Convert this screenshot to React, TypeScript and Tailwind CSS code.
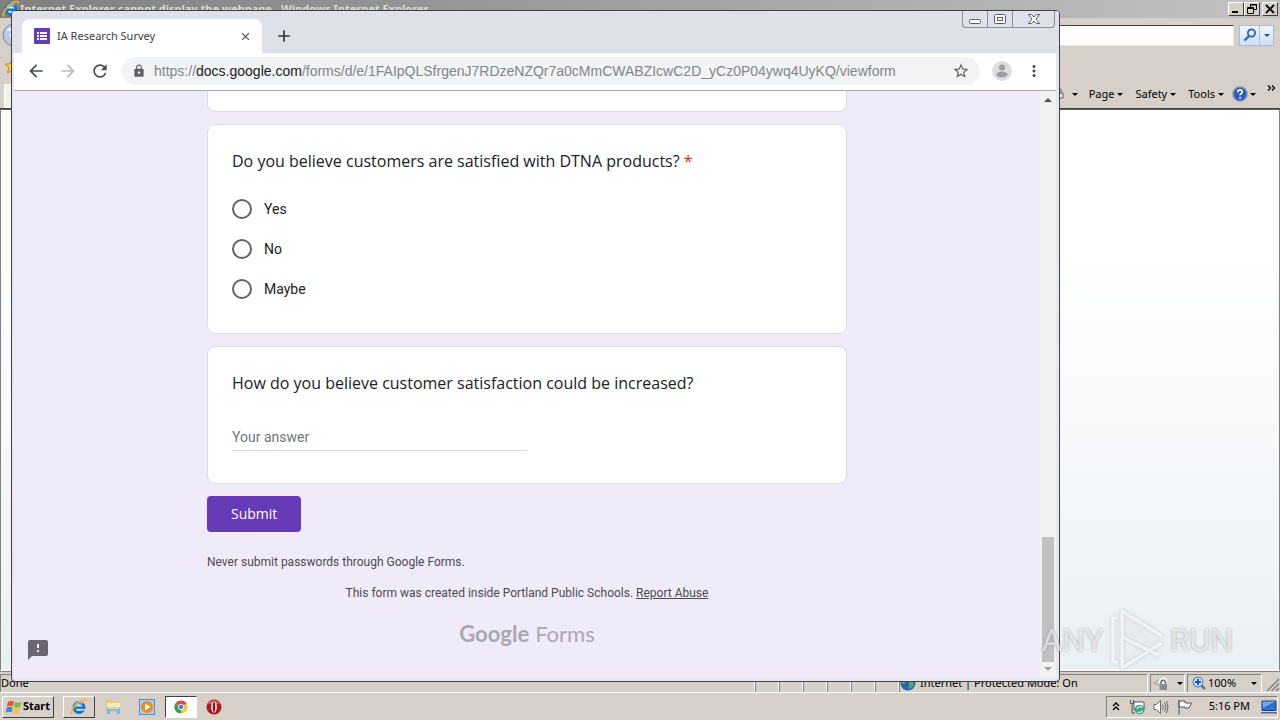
import { useState } from 'react'
import type { ReactNode } from 'react'
import {
  MdAdd, MdArrowBack, MdArrowForward, MdClose, MdFeedback, MdLock, MdMoreVert, MdRefresh, MdStarBorder,
} from 'react-icons/md'

const options = ['Yes', 'No', 'Maybe']
const menus = ['Page', 'Safety', 'Tools']

function Caret({ className = 'w-[6px] h-[3px]' }: { className?: string }) {
  return (
    <svg viewBox="0 0 6 3" className={`shrink-0 ${className}`} fill="currentColor">
      <path d="M0 0h6L3 3z" />
    </svg>
  )
}

function IeLogo() {
  return (
    <svg viewBox="0 0 18 18" className="w-[18px] h-[18px] shrink-0" fill="none">
      <circle cx="9" cy="9.5" r="5" fill="#bfe3fa" stroke="#1b74c9" strokeWidth="3" />
      <path d="M4 9.700h10.500" stroke="#1b74c9" strokeWidth="2.400" />
      <path d="M10.500 12.400h5.500v-1.500h-4.500z" fill="#d6d2ca" />
      <path d="M4.500 7.500a5.500 5.500 0 0 1 8-2" stroke="#7cc6f5" strokeWidth="1.300" />
      <path d="M2 16.500C-.5 14 5 6 11 2.700c3-1.700 5.800-1.700 5.300.8" stroke="#e9b730" strokeWidth="1.700" />
    </svg>
  )
}

function RaisedButton({ label, className = '', children }: { label: string; className?: string; children: ReactNode }) {
  return (
    <button
      type="button"
      aria-label={label}
      className={`flex items-center justify-center bg-[#d6d0c8] border border-t-white border-l-white border-r-[#404040] border-b-[#404040] ${className}`}
    >
      {children}
    </button>
  )
}

function StatusPane({ className = '', children }: { className?: string; children?: ReactNode }) {
  return (
    <div className={`h-[19px] flex items-center border border-t-[#808080] border-l-[#808080] border-r-white border-b-white ${className}`}>
      {children}
    </div>
  )
}

function ExplorerWindow() {
  return (
    <div className="flex-1 min-h-0 flex flex-col bg-[#d6d0c8]">
      {/* Title bar */}
      <div className="h-[18px] flex items-center pl-[2px] pr-[2px] bg-linear-to-r from-[#808080] to-[#c2c2c2]">
        <IeLogo />
        <span className="flex-1 truncate text-[11px] leading-[18px] font-bold text-[#dcd8d0]">
          Internet Explorer cannot display the webpage - Windows Internet Explorer
        </span>
        <RaisedButton label="Minimize" className="w-4 h-[14px]">
          <svg viewBox="0 0 10 10" className="w-[10px] h-[10px]"><path d="M1 7h6v2H1z" /></svg>
        </RaisedButton>
        <RaisedButton label="Restore" className="w-4 h-[14px] mr-[2px]">
          <svg viewBox="0 0 10 10" className="w-[10px] h-[10px]" fill="none" stroke="#000">
            <path d="M3.500 3V.5h6v5H7M3 1h7" /><path d="M.5 3.500h6v6h-6zM0 4.500h7" />
          </svg>
        </RaisedButton>
        <RaisedButton label="Close" className="w-4 h-[14px]">
          <svg viewBox="0 0 10 10" className="w-[10px] h-[10px]" stroke="#000" strokeWidth="1.800"><path d="M1 1l8 8M9 1L1 9" /></svg>
        </RaisedButton>
      </div>

      {/* Address and search */}
      <div className="h-[34px] flex items-center pr-[6px] pl-[2px] gap-[5px]">
        <svg viewBox="0 0 24 24" className="w-6 h-6 shrink-0">
          <circle cx="12" cy="12" r="11" fill="#b9cbe0" stroke="#7486a0" />
          <path d="M4 8a9 7 0 0 1 16 0z" fill="#eef4fb" />
          <path d="M7 12l5-4v8z" fill="#fff" />
        </svg>
        <input
          type="text"
          aria-label="Search"
          className="flex-1 min-w-0 h-[21px] px-1 bg-white text-[11px] outline-none border border-t-[#404040] border-l-[#404040] border-r-[#e8e4dc] border-b-[#e8e4dc]"
        />
        <div className="flex h-[21px] border border-[#a9bdd6] bg-linear-to-b from-[#f1f6fd] to-[#cfdff4]">
          <button type="button" aria-label="Search" className="w-5 flex items-center justify-center border-r border-[#a9bdd6]">
            <svg viewBox="0 0 14 14" className="w-[14px] h-[14px]" fill="#dcebff" stroke="#2a62c4" strokeWidth="1.800">
              <circle cx="8.500" cy="5" r="3.600" /><path d="M6 8l-4.500 4.500" strokeWidth="2.400" />
            </svg>
          </button>
          <button type="button" aria-label="Search options" className="w-[13px] flex items-center justify-center text-[#1d4f9e]">
            <Caret />
          </button>
        </div>
      </div>

      {/* Favorites and command bar */}
      <div className="h-[28px] flex items-center pl-1">
        <svg viewBox="0 0 16 16" className="w-4 h-4"><path d="M8 1l2 5h5l-4 3.500 1.500 5.500L8 12l-4.500 3L5 9.500 1 6h5z" fill="#ffd24a" stroke="#c98a12" /></svg>
      </div>
      <div className="h-[29px] flex items-center justify-end pr-[4px] pl-1 text-[11px] text-black border-b border-[#404040]">
        <div className="mr-auto self-stretch mt-1 w-40 bg-[#f3f1ec] border border-white" />
        <span className="flex items-center gap-2 mr-[11px]">
          <svg viewBox="0 0 12 12" className="w-3 h-3" fill="#e8e8e8" stroke="#666"><path d="M3 1h6v4H3zM1 5h10v5H1z" /></svg>
          <Caret />
        </span>
        <div className="flex gap-3 mr-2">
          {menus.map(item => (
            <button key={item} type="button" className="flex items-center gap-[3px]">
              {item}
              <Caret />
            </button>
          ))}
        </div>
        <button type="button" aria-label="Help" className="flex items-center gap-[2px] mr-[11px]">
          <svg viewBox="0 0 16 16" className="w-4 h-4" fill="none">
            <circle cx="8" cy="8" r="7" fill="#2a5bc0" stroke="#8793a8" strokeWidth="1.500" />
            <path d="M5.700 6.200c0-3.200 4.800-3 4.600-.2-.1 1.500-2.200 1.600-2.200 3.300M8.100 10.700v1.700" stroke="#fff" strokeWidth="1.700" />
          </svg>
          <Caret />
        </button>
        <button type="button" aria-label="More commands" className="mb-3">
          <svg viewBox="0 0 9 6" className="w-[9px] h-[6px]" fill="none" stroke="#000" strokeWidth="1.300">
            <path d="M1 .5L3.500 3 1 5.500M5 .5L7.500 3 5 5.500" />
          </svg>
        </button>
      </div>

      {/* Document */}
      <div className="flex-1 border-x border-x-[#808080] border-t border-t-[#606060] border-b border-b-white bg-linear-to-b from-white from-25% to-[#ebf0f5]" />

      {/* Status bar */}
      <div className="h-[21px] pt-[2px] flex items-center text-[11px] text-black border-t border-[#808080]">
        <StatusPane className="flex-1">Done</StatusPane>
        <StatusPane className="w-6" />
        <StatusPane className="w-6" />
        <StatusPane className="w-6" />
        <StatusPane className="w-6" />
        <StatusPane className="w-6" />
        <StatusPane className="w-6" />
        <StatusPane className="w-[249px] gap-1">
          <svg viewBox="0 0 16 16" className="w-4 h-4">
            <circle cx="8" cy="8" r="7.500" fill="#2b62b8" />
            <path d="M3 3c3-2 5-1 5 1s-3 2-3 4-3 1-4-1zM9 7c3-2 5 0 5 2s-3 5-5 5 1-3 0-4z" fill="#45b25a" />
          </svg>
          <span>Internet | Protected Mode: On</span>
        </StatusPane>
        <StatusPane className="w-[35px] ml-[2px] justify-center gap-2">
          <svg viewBox="0 0 16 16" className="w-4 h-4">
            <path d="M1 8l8-6 3 3-7 5z" fill="#d0d0d0" stroke="#9a9a9a" />
            <circle cx="10" cy="6.500" r="4.500" fill="#f0f0f0" />
            <path d="M8 9V7.500a2 2 0 0 1 4.500 0V9" fill="none" stroke="#707070" strokeWidth="1.500" />
            <path d="M6.500 9h7.500v6H6.500z" fill="#8c8c8c" />
          </svg>
          <Caret />
        </StatusPane>
        <StatusPane className="w-[75px] ml-[2px] pl-1 gap-[2px]">
          <svg viewBox="0 0 14 14" className="w-[14px] h-[14px]" fill="none">
            <path d="M9 9l4 4" stroke="#6b7280" strokeWidth="2.500" />
            <circle cx="6" cy="6" r="4.800" fill="#dbeafe" stroke="#5d8fd6" strokeWidth="1.400" />
            <path d="M6 3v6M3 6h6" stroke="#1558c0" strokeWidth="2" />
          </svg>
          <span className="flex-1">100%</span>
          <span className="mr-1"><Caret /></span>
        </StatusPane>
        <svg viewBox="0 0 14 14" className="w-[14px] h-[14px] ml-1 self-end" stroke="#808080" strokeWidth="1.500">
          <path d="M1 13L13 1M5.500 13L13 5.500M10 13l3-3" />
        </svg>
      </div>
    </div>
  )
}

function WindowButtons() {
  return (
    <div className="flex h-[17px] border border-t-0 border-[#8b8f9a] rounded-b-[4px] text-[#5c5f66]">
      <button type="button" aria-label="Minimize" className="w-[25px] flex items-center justify-center border-r border-[#8b8f9a]">
        <svg viewBox="0 0 12 10" className="w-3 h-[10px]" fill="#fff" stroke="currentColor"><rect x=".5" y="5.500" width="11" height="4" rx="1" /></svg>
      </button>
      <button type="button" aria-label="Maximize" className="w-[25px] flex items-center justify-center border-r border-[#8b8f9a]">
        <svg viewBox="0 0 12 10" className="w-3 h-[10px]" fill="#fff" stroke="currentColor"><rect x=".5" y=".5" width="11" height="9" rx="1" /><rect x="3.500" y="3.500" width="5" height="3" /></svg>
      </button>
      <button type="button" aria-label="Close" className="w-[41px] flex items-center justify-center">
        <svg viewBox="0 0 12 10" className="w-3 h-[10px]" fill="#fff" stroke="currentColor">
          <path d="M.5.5h3L6 3 8.500.5h3L8 5l3.500 4.500h-3L6 7 3.500 9.500h-3L4 5z" />
        </svg>
      </button>
    </div>
  )
}

function SurveyForm() {
  const [choice, setChoice] = useState('')
  const [answer, setAnswer] = useState('')

  return (
    <form onSubmit={e => e.preventDefault()} className="w-full max-w-[640px] mx-auto font-[Roboto,sans-serif] text-[#202124]">
      <div className="h-[21px] bg-white border border-t-0 border-[#dadce0] rounded-b-lg mb-3" />

      <fieldset className="bg-white border border-[#dadce0] rounded-lg px-6 py-6 mb-3">
        <legend className="contents">
          <span className="block mb-4 text-base leading-6 font-['Open_Sans',sans-serif]">
            Do you believe customers are satisfied with DTNA products? <span className="text-[#d93025]">*</span>
          </span>
        </legend>
        {options.map(option => (
          <label key={option} className="flex items-center h-10 gap-3 text-sm">
            <input
              type="radio"
              name="satisfied"
              value={option}
              checked={choice === option}
              onChange={() => setChoice(option)}
              className="appearance-none w-5 h-5 rounded-full border-2 border-[#5f6368] checked:border-[6px] checked:border-[#673ab7]"
            />
            {option}
          </label>
        ))}
      </fieldset>

      <div className="bg-white border border-[#dadce0] rounded-lg px-6 pt-6 pb-8 mb-3">
        <label htmlFor="answer" className="block mb-7 text-base leading-6 font-['Open_Sans',sans-serif]">
          How do you believe customer satisfaction could be increased?
        </label>
        <input
          id="answer"
          type="text"
          placeholder="Your answer"
          value={answer}
          onChange={e => setAnswer(e.target.value)}
          className="block w-1/2 h-7 text-sm border-b border-[#dadce0] outline-none placeholder:text-[#70757a]"
        />
      </div>

      <button type="submit" className="block h-9 px-6 rounded bg-[#673ab7] text-white text-sm font-medium font-['Open_Sans',sans-serif]">
        Submit
      </button>

      <p className="mt-[22px] text-xs leading-4 text-[#4d4a53]">Never submit passwords through Google Forms.</p>
      <p className="mt-[15px] text-xs leading-4 text-center text-[#4d4a53]">
        This form was created inside Portland Public Schools. <a href="#report" className="underline">Report Abuse</a>
      </p>
      <p className="mt-[17px] flex justify-center gap-[6px] text-[22px] leading-8 text-[#aba7b1] font-[Lato,sans-serif]">
        <span className="font-bold">Google</span> <span>Forms</span>
      </p>
    </form>
  )
}

function ChromeWindow() {
  return (
    <div className="absolute left-[11px] top-[10px] right-[220px] bottom-[38px] flex flex-col pl-[2px] pr-[3px] pb-[3px] bg-[#e6e8ee] border border-[#3f4048] rounded-t-[4px] rounded-b-[4px] overflow-hidden">
      {/* Tab strip */}
      <div className="h-[42px] shrink-0 flex items-start -ml-[2px] -mr-[3px] pl-[10px] pr-1 bg-[#dee1e9]">
        <div className="w-60 h-[34px] mt-2 flex items-center pl-3 pr-[10px] bg-white rounded-t-lg">
          <svg viewBox="0 0 16 16" className="w-4 h-4 shrink-0">
            <rect width="16" height="16" rx="1" fill="#673ab7" />
            <path d="M3 4h2v2H3zM6 4h7v2H6zM3 7h2v2H3zM6 7h7v2H6zM3 10h2v2H3zM6 10h7v2H6z" fill="#fff" />
          </svg>
          <span className="flex-1 ml-[7px] text-[11px] text-[#3c4043]">IA Research Survey</span>
          <button type="button" aria-label="Close tab"><MdClose className="w-[13px] h-[13px] text-[#45494d]" /></button>
        </div>
        <button type="button" aria-label="New tab" className="mt-[15px] ml-3"><MdAdd className="w-5 h-5 text-[#303439]" /></button>
        <div className="ml-auto"><WindowButtons /></div>
      </div>

      {/* Toolbar */}
      <div className="h-[38px] shrink-0 flex items-center pl-3 pr-[13px] pb-[2px] bg-white border-b border-[#a9a9b0] text-[#5f6368]">
        <button type="button" aria-label="Back"><MdArrowBack className="w-5 h-5 text-[#4a4d51]" /></button>
        <button type="button" aria-label="Forward" className="ml-3"><MdArrowForward className="w-5 h-5 text-[#babcbe]" /></button>
        <button type="button" aria-label="Reload" className="ml-3"><MdRefresh className="w-5 h-5 text-[#4a4d51]" /></button>
        <div className="flex-1 min-w-0 h-7 mx-3 px-[10px] flex items-center bg-[#f1f3f4] rounded-full">
          <MdLock className="w-[14px] h-[14px] shrink-0" />
          <span className="flex-1 truncate ml-2 text-sm font-['Liberation_Sans',sans-serif] text-[#80868b]">
            https://<span className="text-[#202124]">docs.google.com</span>/forms/d/e/1FAIpQLSfrgenJ7RDzeNZQr7a0cMmCWABZIcwC2D_yCz0P04ywq4UyKQ/viewform
          </span>
          <button type="button" aria-label="Bookmark this page"><MdStarBorder className="w-[18px] h-[18px]" /></button>
        </div>
        <button type="button" aria-label="Profile">
          <svg viewBox="0 0 20 20" className="w-5 h-5">
            <circle cx="10" cy="10" r="10" fill="#dcdddf" />
            <circle cx="10" cy="6.500" r="3" fill="#9a9da1" />
            <ellipse cx="10" cy="13.500" rx="5.500" ry="3" fill="#9a9da1" />
          </svg>
        </button>
        <button type="button" aria-label="Menu" className="ml-[13px]"><MdMoreVert className="w-[18px] h-[18px] text-[#4a4d51]" /></button>
      </div>

      {/* Page */}
      <div className="flex-1 min-h-0 flex bg-[#f0ebf8]">
        <div className="relative flex-1 min-w-0 overflow-hidden">
          <SurveyForm />
          <button type="button" aria-label="Report a problem" className="absolute left-3 bottom-4">
            <MdFeedback className="w-6 h-6 text-[#6c6673]" />
          </button>
        </div>
        <div className="w-4 flex flex-col items-center py-[7px] bg-[#f1f1f1]">
          <Caret className="rotate-180 w-2 h-1 text-[#505050]" />
          <div className="flex-1" />
          <div className="w-3 h-[125px] mb-[5px] bg-[#c1c1c1]" />
          <Caret className="w-2 h-1 text-[#a3a3a3]" />
        </div>
      </div>
    </div>
  )
}

function Watermark() {
  return (
    <div className="absolute right-[47px] bottom-[48px] flex items-center gap-1 text-[32px] leading-[60px] font-[Roboto,sans-serif] text-white/60 [text-shadow:0_0_3px_rgb(120_120_130_/_0.6)] pointer-events-none">
      <span>ANY</span>
      <svg viewBox="0 0 58 64" className="w-[58px] h-16 drop-shadow-[0_0_2px_rgba(120,120,130,0.5)]" fill="none" stroke="#fff" strokeOpacity=".65" strokeWidth="3" strokeLinejoin="round">
        <path d="M9 10H5v44h5" />
        <path d="M54 28L14 3v26l36 18M14 29v31l40-25" />
        <path d="M14 3v26l36 6 4-7zM14 60l40-25-4-4-36 22z" fill="#fff" fillOpacity=".2" stroke="none" />
      </svg>
      <span>RUN</span>
    </div>
  )
}

function Taskbar() {
  return (
    <div className="h-7 shrink-0 flex items-center pl-[2px] pr-[2px] bg-[#d6d0c8] border-t border-white text-[11px] text-black">
      <RaisedButton label="Start" className="w-[52px] h-[22px] gap-[1px] font-bold">
        <svg viewBox="0 0 16 16" className="w-4 h-4">
          <path d="M2 3c2-2 4-1.500 6-.5L7 7.500C5 6.500 3 6.500.8 8z" fill="#e8592b" />
          <path d="M9 3c2 1 4 1 6.500 0L14 8c-2 1-4 1-6 0z" fill="#7dbb3c" />
          <path d="M.6 9c2-1.500 4-1.500 6-.5l-1 5c-2-1-4-1-6 .5z" fill="#3a86d8" />
          <path d="M7.600 9c2 1 4 1 6.200 0l-1.300 5c-2 1-4 1-6 0z" fill="#f7c331" />
        </svg>
        Start
      </RaisedButton>
      <RaisedButton label="Internet Explorer" className="w-8 h-[22px] ml-[9px]"><IeLogo /></RaisedButton>
      <button type="button" aria-label="Windows Explorer" className="ml-[10px]">
        <svg viewBox="0 0 16 16" className="w-4 h-4">
          <path d="M1 1h5l1 2h7v10H1z" fill="#e9c95c" />
          <path d="M2 4h13v6H2z" fill="#fbedb0" />
          <path d="M2 8.500h13V15h-3v-3.500H5V15H2z" fill="#79b9e0" />
          <path d="M3 9.500h11" stroke="#c9e6f7" />
        </svg>
      </button>
      <button type="button" aria-label="Media Player" className="ml-[18px]">
        <svg viewBox="0 0 16 16" className="w-4 h-4">
          <rect x=".5" y=".5" width="15" height="15" fill="#a9cdee" stroke="#4f8fca" />
          <circle cx="8" cy="8" r="6" fill="#f08a1d" />
          <path d="M6 4.500L11.500 8 6 11.500z" fill="#fff" />
        </svg>
      </button>
      <button type="button" aria-label="Google Chrome" className="w-8 h-[22px] ml-[10px] flex items-center justify-center bg-white border border-t-[#404040] border-l-[#404040] border-r-white border-b-white">
        <svg viewBox="0 0 16 16" className="w-[14px] h-[14px]">
          <path d="M8 8L1.500 4.200A7.500 7.500 0 0 1 14.500 4.200z" fill="#df4a3c" />
          <path d="M8 8l6.500-3.800A7.500 7.500 0 0 1 8 15.500z" fill="#f8c934" />
          <path d="M8 8v7.500A7.500 7.500 0 0 1 1.500 4.200z" fill="#2f9e55" />
          <circle cx="8" cy="8" r="3.500" fill="#fff" />
          <circle cx="8" cy="8" r="2.700" fill="#4380ea" />
        </svg>
      </button>
      <button type="button" aria-label="Opera" className="ml-[9px]">
        <svg viewBox="0 0 16 16" className="w-4 h-4">
          <circle cx="8" cy="8" r="7.500" fill="#b01820" />
          <path d="M2 5a6.500 6 0 0 1 12 0z" fill="#d8575c" />
          <ellipse cx="8" cy="8" rx="2.800" ry="5.500" fill="#fff" />
          <ellipse cx="8" cy="8" rx="1.300" ry="5" fill="#8e1017" />
        </svg>
      </button>

      {/* Tray */}
      <div className="ml-auto h-[22px] flex items-center pl-[5px] border border-t-[#808080] border-l-[#808080] border-r-white border-b-white">
        <svg viewBox="0 0 8 9" className="w-2 h-[9px]" fill="none" stroke="#000" strokeWidth="1.300"><path d="M1 4l3-3 3 3M1 8l3-3 3 3" /></svg>
        <svg viewBox="0 0 16 16" className="w-4 h-4 ml-[9px]" fill="none">
          <path d="M5 3h10v8H5z" fill="#fff" stroke="#555" />
          <path d="M1.500 1v3.500h3V1M3 5v9h3" stroke="#555" />
          <circle cx="10.500" cy="10.500" r="4.800" fill="#3aa88a" />
          <path d="M8 10a3 3 0 0 1 5-1.500M13 11.500A3 3 0 0 1 8.500 13" stroke="#d5f5ea" strokeWidth="1.200" />
        </svg>
        <svg viewBox="0 0 16 16" className="w-4 h-4 ml-2" fill="none" stroke="#6b6b6b">
          <path d="M1 5.500h2.500l4-4v13l-4-4H1z" fill="#fff" />
          <path d="M9.500 5.500q1.500 2.500 0 5M11.500 3.500q3 4.500 0 9M13.500 2q3 6 0 12" />
        </svg>
        <svg viewBox="0 0 16 16" className="w-4 h-4 ml-2" fill="#fff" stroke="#555"><path d="M2 1v14.500M2 2h6v2h6.500L12 9H8V8H2z" /></svg>
        <span className="ml-4">5:16 PM</span>
        <svg viewBox="0 0 16 16" className="w-4 h-4 ml-[11px]">
          <path d="M1 2h14v9.500H1z" fill="#2d6fd2" stroke="#1d3f7c" />
          <path d="M1.500 2.500h13L2 9z" fill="#6fa8ee" />
          <path d="M0 13h16v1.500H0z" fill="#5a6b85" />
        </svg>
      </div>
    </div>
  )
}

export default function App() {
  return (
    <div className="relative h-screen flex flex-col overflow-hidden font-['Noto_Sans',sans-serif]">
      <ExplorerWindow />
      <Taskbar />
      <ChromeWindow />
      <Watermark />
    </div>
  )
}
